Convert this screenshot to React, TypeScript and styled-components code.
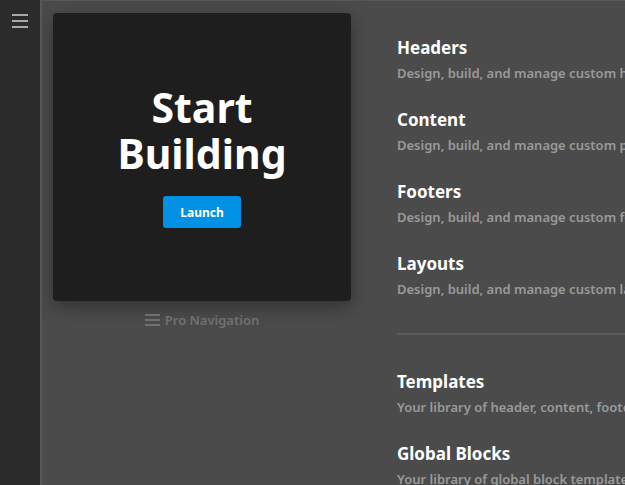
import styled, { createGlobalStyle } from 'styled-components';

const GlobalStyle = createGlobalStyle`
  html, body {
    margin: 0;
    padding: 0;
    height: 100%;
    overflow: hidden;
    background: #4b4b4b;
    font-family: "Noto Sans", "Open Sans", sans-serif;
  }
  #root {
    height: 100%;
  }
`;

const Shell = styled.div`
  display: flex;
  height: 100vh;
`;

const Sidebar = styled.aside`
  width: 40px;
  flex-shrink: 0;
  background: #2b2b2b;
  border-right: 2px solid #585858;
  display: flex;
  justify-content: center;
  padding-top: 14px;
  box-sizing: content-box;
`;

const MenuButton = styled.button`
  width: 16px;
  height: 14px;
  padding: 0;
  border: none;
  background: transparent;
  display: flex;
  flex-direction: column;
  justify-content: space-between;
  cursor: pointer;

  span {
    display: block;
    height: 2px;
    background: #a9a9a9;
  }
`;

const Main = styled.main`
  flex: 1;
  display: flex;
  gap: 46px;
  padding: 12px 0 0 11px;
  border-top: 1px solid #575757;
  overflow: hidden;
`;

const LeftColumn = styled.div`
  display: flex;
  flex-direction: column;
  align-items: center;
  width: 298px;
  flex-shrink: 0;
`;

const Card = styled.div`
  width: 298px;
  height: 288px;
  background: #1e1e1e;
  border-radius: 4px;
  box-shadow: 0 6px 18px rgba(0, 0, 0, 0.35);
  display: flex;
  flex-direction: column;
  align-items: center;
  justify-content: center;
  box-sizing: border-box;
  padding-bottom: 2px;
`;

const Headline = styled.h1`
  margin: 0;
  color: #ffffff;
  font-size: 41px;
  line-height: 46px;
  font-weight: 700;
  text-align: center;
`;

const LaunchButton = styled.button`
  margin-top: 20px;
  width: 78px;
  height: 32px;
  border: none;
  border-radius: 3px;
  background: #0090e4;
  color: #ffffff;
  font-family: inherit;
  font-size: 12px;
  font-weight: 700;
  cursor: pointer;
`;

const ProNav = styled.div`
  margin-top: 10px;
  display: flex;
  align-items: center;
  gap: 5px;
  color: #707070;
  font-size: 13px;
  font-weight: 600;
`;

const RightColumn = styled.div`
  flex: 1;
  min-width: 0;
  padding-top: 23px;
`;

const Entry = styled.div`
  height: 72px;
`;

const EntryTitle = styled.h2`
  margin: 0;
  color: #ffffff;
  font-size: 17px;
  line-height: 24px;
  font-weight: 700;
  white-space: nowrap;
`;

const EntryText = styled.p`
  margin: 4px 0 0;
  color: #9a9a9a;
  font-size: 13px;
  line-height: 18px;
  font-weight: 600;
  white-space: nowrap;
`;

const Divider = styled.hr`
  margin: 9px 0 35px;
  border: none;
  height: 2px;
  background: #5a5a5a;
`;

type Item = { title: string; text: string };

const blocks: Item[] = [
  { title: 'Headers', text: 'Design, build, and manage custom headers for your site.' },
  { title: 'Content', text: 'Design, build, and manage custom page content.' },
  { title: 'Footers', text: 'Design, build, and manage custom footers for your site.' },
  { title: 'Layouts', text: 'Design, build, and manage custom layouts.' },
];

const libraries: Item[] = [
  { title: 'Templates', text: 'Your library of header, content, footer and layout templates.' },
  { title: 'Global Blocks', text: 'Your library of global block templates.' },
];

function MenuLines() {
  return (
    <svg width="15" height="14" viewBox="0 0 15 14">
      <rect x="0" y="1" width="15" height="2" fill="#707070" />
      <rect x="0" y="6" width="15" height="2" fill="#707070" />
      <rect x="0" y="11" width="15" height="2" fill="#707070" />
    </svg>
  );
}

export default function App() {
  return (
    <>
      <GlobalStyle />
      <Shell>
        <Sidebar>
          <MenuButton aria-label="Menu">
            <span />
            <span />
            <span />
          </MenuButton>
        </Sidebar>
        <Main>
          <LeftColumn>
            <Card>
              <Headline>
                Start
                <br />
                Building
              </Headline>
              <LaunchButton>Launch</LaunchButton>
            </Card>
            <ProNav>
              <MenuLines />
              Pro Navigation
            </ProNav>
          </LeftColumn>
          <RightColumn>
            {blocks.map((b) => (
              <Entry key={b.title}>
                <EntryTitle>{b.title}</EntryTitle>
                <EntryText>{b.text}</EntryText>
              </Entry>
            ))}
            <Divider />
            {libraries.map((b) => (
              <Entry key={b.title}>
                <EntryTitle>{b.title}</EntryTitle>
                <EntryText>{b.text}</EntryText>
              </Entry>
            ))}
          </RightColumn>
        </Main>
      </Shell>
    </>
  );
}
